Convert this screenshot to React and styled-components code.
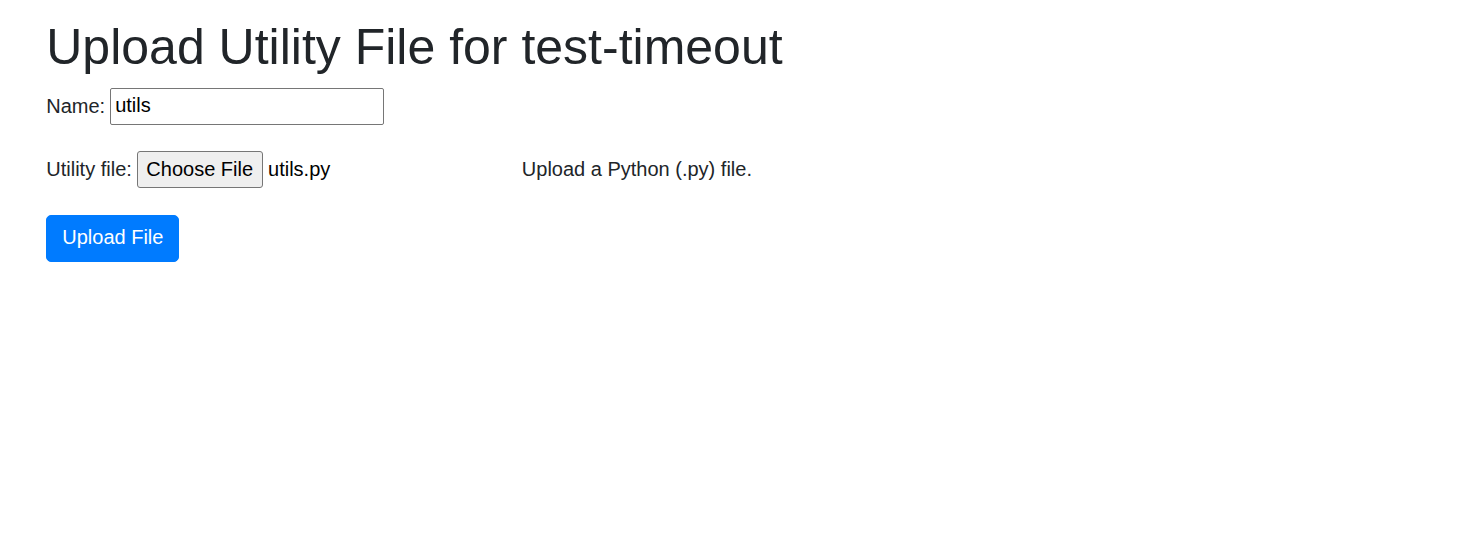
import styled, { createGlobalStyle } from "styled-components";

const GlobalStyle = createGlobalStyle`
  html, body {
    margin: 0;
    padding: 0;
    background: #fff;
  }
  body {
    font-family: "Liberation Sans", Arial, sans-serif;
    font-size: 20px;
    line-height: 1.5;
    color: #212529;
  }
`;

const Container = styled.main`
  max-width: 1425px;
  margin: 0 auto;
  padding: 17px 18.75px 0 23.75px;
  box-sizing: border-box;
`;

const Title = styled.h1`
  margin: 0 0 11px;
  font-size: 50px;
  font-weight: 500;
  line-height: 1.2;
`;

const Row = styled.div`
  display: flex;
  align-items: center;
  gap: 5px;
  margin-bottom: ${(p) => p.$gap || 0}px;
`;

const Label = styled.label`
  white-space: nowrap;
  margin-bottom: ${(p) => p.$lift || 0}px;
`;

const TextInput = styled.input`
  box-sizing: border-box;
  width: 274px;
  height: 37px;
  padding: 0 4px 2px;
  border: 1px solid #767676;
  border-radius: 2px;
  font: inherit;
  color: #000;
  background: #fff;
`;

const FileWidget = styled.div`
  display: flex;
  align-items: center;
  gap: 5px;
  width: 380px;
  color: #000;
`;

const ChooseButton = styled.button`
  box-sizing: border-box;
  height: 37px;
  padding: 0 9px 1px 8.5px;
  border: 1px solid #767676;
  border-radius: 3px;
  background: #efefef;
  font: inherit;
  color: #000;
`;

const SubmitButton = styled.button`
  box-sizing: border-box;
  height: 47px;
  padding: 0 15px 3px;
  border: 1px solid #007bff;
  border-radius: 5px;
  background: #007bff;
  color: #fff;
  font: inherit;
  cursor: pointer;
`;

const App = () => {
  return (
    <>
      <GlobalStyle />
      <Container>
        <Title>Upload Utility File for test-timeout</Title>
        <form onSubmit={(e) => e.preventDefault()}>
          <Row $gap={26}>
            <Label htmlFor="name" $lift={2}>
              Name:
            </Label>
            <TextInput id="name" type="text" defaultValue="utils" />
          </Row>
          <Row $gap={27}>
            <Label $lift={1}>Utility file:</Label>
            <FileWidget>
              <ChooseButton type="button">Choose File</ChooseButton>
              <Label as="span" $lift={1}>
                utils.py
              </Label>
            </FileWidget>
            <Label as="span" $lift={1}>
              Upload a Python (.py) file.
            </Label>
          </Row>
          <SubmitButton type="submit">Upload File</SubmitButton>
        </form>
      </Container>
    </>
  );
};

export default App;
